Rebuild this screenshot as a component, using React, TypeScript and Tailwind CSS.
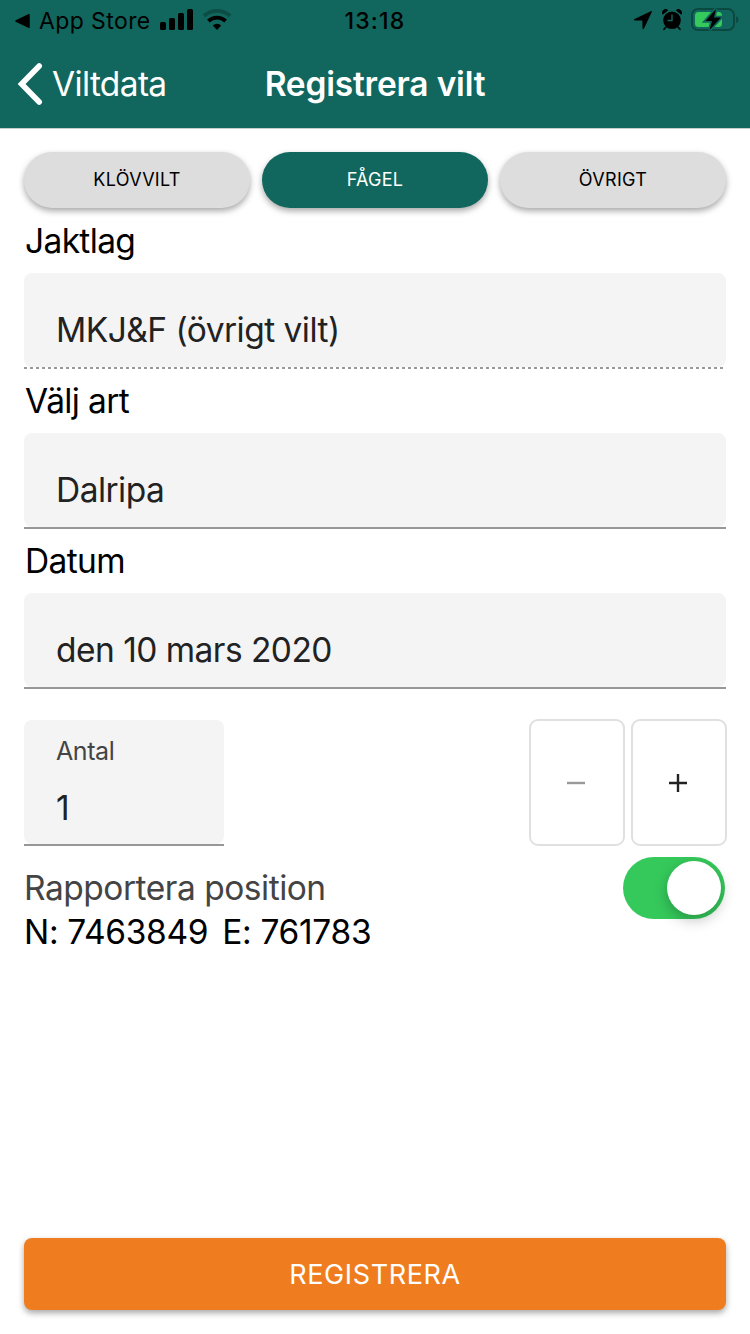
import { useState } from 'react';
import clsx from 'clsx';

const tabs = ['Klövvilt', 'Fågel', 'Övrigt'];

const StatusBar = () => (
  <div className="grid h-10 grid-cols-3 items-center px-[14px] text-black">
    <div className="flex items-center">
      <svg width="16" height="16" viewBox="0 0 16 16" className="mt-px">
        <path d="M2 8 L15 1.8 V14.2 Z" fill="currentColor" stroke="currentColor" strokeWidth="1.5" strokeLinejoin="round" />
      </svg>
      <span className="ml-[9px] pt-0.5 text-[23px] leading-none tracking-[0.4px]">App Store</span>
      <svg width="34" height="22" viewBox="0 0 34 22" className="ml-[9px]" fill="currentColor">
        <rect x="0" y="13" width="6" height="8" rx="1.5" />
        <rect x="9" y="9" width="6" height="12" rx="1.5" />
        <rect x="18" y="4" width="6" height="17" rx="1.5" />
        <rect x="27" y="0" width="6" height="21" rx="1.5" />
      </svg>
      <svg width="30" height="22" viewBox="0 0 30 22" className="ml-[8px] shrink-0" fill="none" stroke="currentColor" strokeWidth="3.8">
        <path d="M2 7 A19 19 0 0 1 28 7" opacity="0.25" />
        <path d="M6.4 12 A12.6 12.6 0 0 1 23.6 12" />
        <path d="M10.8 16.4 A6.2 6.2 0 0 1 19.2 16.4 L15 20.9 Z" fill="currentColor" stroke="none" />
      </svg>
    </div>
    <div className="pt-0.5 text-center text-[23px] leading-none font-medium tracking-[1.2px]">13:18</div>
    <div className="flex items-center justify-end">
      <svg width="20" height="20" viewBox="0 0 20 20" fill="currentColor">
        <path d="M18.3 1 L1 9.3 Q0.4 10.4 1.6 10.5 L9.3 10.6 L9.5 18.5 Q10 19.8 11 18.6 L18.9 1.7 Q19 0.9 18.3 1 Z" />
      </svg>
      <svg width="20" height="22" viewBox="0 0 20 22" className="ml-[9px]" fill="currentColor">
        <circle cx="10" cy="11.3" r="8.8" />
        <path d="M0.7 5.8 A3.6 3.6 0 0 1 6.3 1.3 Z M19.3 5.8 A3.6 3.6 0 0 0 13.7 1.3 Z" />
        <path d="M4 18 L2 20.3 M16 18 L18 20.3" stroke="currentColor" strokeWidth="1.6" strokeLinecap="round" />
        <path d="M10 5.5 V11.5 H5.5" fill="none" stroke="#11675d" strokeWidth="1.4" />
      </svg>
      <svg width="48" height="24" viewBox="0 0 48 24" className="-mr-[3px] ml-[9px]">
        <rect x="1" y="1" width="42" height="21" rx="6" fill="none" stroke="#0b4840" strokeWidth="2" />
        <path d="M45.2 8 Q47.4 9 47.4 11.5 Q47.4 14 45.2 15 Z" fill="#0b4840" />
        <rect x="4" y="4" width="27" height="15" rx="3.5" fill="#35c95b" />
        {/* outline first, so the bolt stays full size on top of it */}
        <path d="M25 1 L14.5 13 H21 L18.5 22 L30 9.5 H23 Z" fill="#000" stroke="#11675d" strokeWidth="3.4" />
        <path d="M25 1 L14.5 13 H21 L18.5 22 L30 9.5 H23 Z" fill="#000" />
      </svg>
    </div>
  </div>
);

const Label = ({ children }: { children: React.ReactNode }) => (
  <div className="flex h-16 items-center pt-px pl-px text-[33.5px] leading-none tracking-[-0.65px] text-black">{children}</div>
);

const Field = ({ value, disabled }: { value: string; disabled?: boolean }) => (
  <div>
    <div className="flex h-[94px] items-center rounded-lg bg-[#f4f4f4] pt-[22px] pl-8 text-[33.5px] leading-none tracking-[-0.53px] text-[#222]">
      {value}
    </div>
    <div
      className={clsx(
        'h-0.5',
        disabled
          ? 'bg-[repeating-linear-gradient(90deg,#999_0_3px,transparent_3px_6px)]'
          : 'bg-[#979797]'
      )}
    />
  </div>
);

const App = () => {
  const [activeTab, setActiveTab] = useState('Fågel');
  const [count, setCount] = useState(1);
  const [reportPosition, setReportPosition] = useState(true);

  return (
    <div className="flex h-[1334px] w-[750px] flex-col bg-white font-['Inter','Liberation_Sans',sans-serif]">
      <header className="h-[129px] border-b border-[#c4cfcd] bg-[#11675d]">
        <StatusBar />
        <div className="grid h-[88px] grid-cols-3 items-center text-[33.5px] leading-none text-white">
          <button className="flex items-center pl-[17px]">
            <svg width="26" height="44" viewBox="0 0 26 44" fill="none" stroke="currentColor" strokeWidth="5.6" strokeLinecap="round" strokeLinejoin="miter">
              <path d="M22.2 4 L4.6 22 L22.2 40" />
            </svg>
            <span className="ml-[9px] pt-0.5 tracking-[-0.65px]">Viltdata</span>
          </button>
          <h1 className="pt-0.5 text-center font-semibold tracking-[-0.2px] whitespace-nowrap">Registrera vilt</h1>
        </div>
      </header>

      <main className="flex flex-1 flex-col px-6 pt-[23px] pb-6">
        <div className="grid grid-cols-3 gap-3">
          {tabs.map((tab) => (
            <button
              key={tab}
              onClick={() => setActiveTab(tab)}
              className={clsx(
                'h-14 rounded-full pb-0.5 text-[18px] tracking-[0.3px] uppercase shadow-[0_3px_6px_rgba(0,0,0,0.35)]',
                tab === activeTab ? 'bg-[#11675d] text-white' : 'bg-[#ddd] text-black'
              )}
            >
              {tab}
            </button>
          ))}
        </div>

        <div className="pt-px">
          <Label>Jaktlag</Label>
          <Field value="MKJ&F (övrigt vilt)" disabled />
          <Label>Välj art</Label>
          <Field value="Dalripa" />
          <Label>Datum</Label>
          <Field value="den 10 mars 2020" />
        </div>

        <div className="-mr-px mt-[30px] flex h-[127px] items-stretch">
          <div className="mt-px flex w-[200px] flex-col">
            <div className="flex-1 rounded-lg bg-[#f4f4f4] pt-[19px] pl-8">
              <div className="text-[25px] leading-6 tracking-[-0.4px] text-[#444]">Antal</div>
              <div className="mt-7 text-[33.5px] leading-[34px] text-[#222]">{count}</div>
            </div>
            <div className="h-0.5 bg-[#979797]" />
          </div>
          <div className="ml-auto flex gap-1.5">
            <button
              onClick={() => setCount(Math.max(1, count - 1))}
              className="flex w-24 items-center justify-center rounded-[9px] border-2 border-[#e0e0e0] text-[#999]"
            >
              <svg width="18" height="18" viewBox="0 0 18 18" className="mr-0.5" stroke="currentColor" strokeWidth="2.4">
                <path d="M0 9 H18" />
              </svg>
            </button>
            <button
              onClick={() => setCount(count + 1)}
              className="flex w-24 items-center justify-center rounded-[9px] border-2 border-[#e0e0e0] text-[#222]"
            >
              <svg width="18" height="18" viewBox="0 0 18 18" className="mr-0.5" stroke="currentColor" strokeWidth="2.4">
                <path d="M0 9 H18 M9 0 V18" />
              </svg>
            </button>
          </div>
        </div>

        <div className="mt-[11px] flex h-[62px] items-center justify-between pr-px">
          <span className="pt-px text-[33.5px] leading-none tracking-[-0.48px] text-[#444]">Rapportera position</span>
          <button
            onClick={() => setReportPosition(!reportPosition)}
            className={clsx(
              'flex h-[62px] w-[102px] items-center overflow-visible rounded-full p-1',
              reportPosition ? 'justify-end bg-[#35c95b]' : 'bg-[#e0e0e0]'
            )}
          >
            <span className="size-[54px] rounded-full bg-white shadow-[0_5px_14px_rgba(0,0,0,0.25)]" />
          </button>
        </div>
        <div className="-mt-1 flex gap-[14px] text-[33.5px] leading-[34px] tracking-[-0.33px] text-black">
          <span>N: 7463849</span>
          <span>E: 761783</span>
        </div>

        <button className="mt-auto h-[72px] rounded-lg bg-[#ef7d1f] pt-0.5 text-[27px] tracking-[0.6px] text-white uppercase shadow-[0_3px_6px_rgba(0,0,0,0.35)]">
          Registrera
        </button>
      </main>
    </div>
  );
};

export default App;
